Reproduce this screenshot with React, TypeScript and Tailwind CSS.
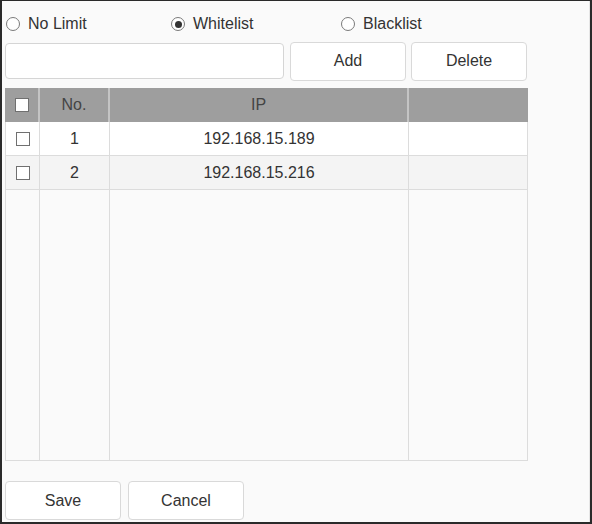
import { useState } from 'react';

const rows = [
  { no: 1, ip: '192.168.15.189' },
  { no: 2, ip: '192.168.15.216' },
];

type Mode = 'none' | 'white' | 'black';

const Radio = ({ checked, label, onClick }: { checked: boolean; label: string; onClick: () => void }) => (
  <button onClick={onClick} className="flex items-center gap-[8px] text-[16px] text-[#333]">
    <span className="flex size-[14px] items-center justify-center rounded-full border border-[#7a7a7a] bg-white">
      {checked && <span className="size-[7px] rounded-full bg-[#333]" />}
    </span>
    {label}
  </button>
);

const Check = ({ className = '' }: { className?: string }) => (
  <span className={`block size-[14px] border border-[#707070] bg-white ${className}`} />
);

export default function App() {
  const [mode, setMode] = useState<Mode>('white');
  const [ip, setIp] = useState('');

  return (
    <div
      className="h-[524px] w-[592px] border-t border-r-2 border-b-2 border-l-2 border-[#2a2a2a] bg-[#fafafa] text-[#333]"
      style={{ fontFamily: '"Liberation Sans", Arial, sans-serif' }}>
      <div className="h-full border-r border-[#e6e6e6] pl-[3px] pr-[3px] pt-[13px]">
        {/* access mode */}
        <div className="flex h-[20px] items-center pl-[1px]">
          <div className="w-[165px]">
            <Radio checked={mode === 'none'} label="No Limit" onClick={() => setMode('none')} />
          </div>
          <div className="w-[170px]">
            <Radio checked={mode === 'white'} label="Whitelist" onClick={() => setMode('white')} />
          </div>
          <Radio checked={mode === 'black'} label="Blacklist" onClick={() => setMode('black')} />
        </div>

        {/* input + actions */}
        <div className="mt-[7px] flex h-[40px] items-center">
          <input
            value={ip}
            onChange={(e) => setIp(e.target.value)}
            className="h-[36px] w-[279px] rounded-[4px] border border-[#d5d5d5] bg-white px-2 text-[16px] outline-none"
          />
          <button className="ml-[6px] h-[39px] w-[116px] rounded-[4px] border border-[#d9d9d9] bg-white text-[16px]">
            Add
          </button>
          <button className="ml-[5px] h-[39px] w-[116px] rounded-[4px] border border-[#d9d9d9] bg-white text-[16px]">
            Delete
          </button>
        </div>

        {/* ip table */}
        <div className="mt-[7px] w-[523px] border-b border-[#dcdcdc] text-[16px]">
          <div className="flex h-[34px] bg-[#9e9e9e] text-[#444]">
            <div className="flex w-[35px] items-center justify-center border-r-2 border-[#c4c4c4]">
              <Check className="border-[#8a8a8a]" />
            </div>
            <div className="flex w-[70px] items-center justify-center border-r-2 border-[#c4c4c4]">No.</div>
            <div className="flex w-[299px] items-center justify-center border-r-2 border-[#c4c4c4]">IP</div>
            <div className="flex-1" />
          </div>
          {rows.map((r, i) => (
            <div
              key={r.no}
              className={`flex h-[34px] border-b border-[#dcdcdc] border-l border-r ${i % 2 ? 'bg-[#f4f4f4]' : 'bg-white'}`}>
              <div className="flex w-[34px] items-center justify-center border-r border-[#dcdcdc]">
                <Check />
              </div>
              <div className="flex w-[70px] items-center justify-center border-r border-[#dcdcdc]">{r.no}</div>
              <div className="flex w-[299px] items-center justify-center border-r border-[#dcdcdc]">{r.ip}</div>
              <div className="flex-1" />
            </div>
          ))}
          <div className="flex h-[270px] border-l border-r border-[#dcdcdc]">
            <div className="w-[34px] border-r border-[#dcdcdc]" />
            <div className="w-[70px] border-r border-[#dcdcdc]" />
            <div className="w-[299px] border-r border-[#dcdcdc]" />
            <div className="flex-1" />
          </div>
        </div>

        {/* footer */}
        <div className="mt-[20px] flex gap-[7px]">
          <button className="h-[39px] w-[116px] rounded-[4px] border border-[#d9d9d9] bg-white text-[16px]">Save</button>
          <button className="h-[39px] w-[116px] rounded-[4px] border border-[#d9d9d9] bg-white text-[16px]">Cancel</button>
        </div>
      </div>
    </div>
  );
}
